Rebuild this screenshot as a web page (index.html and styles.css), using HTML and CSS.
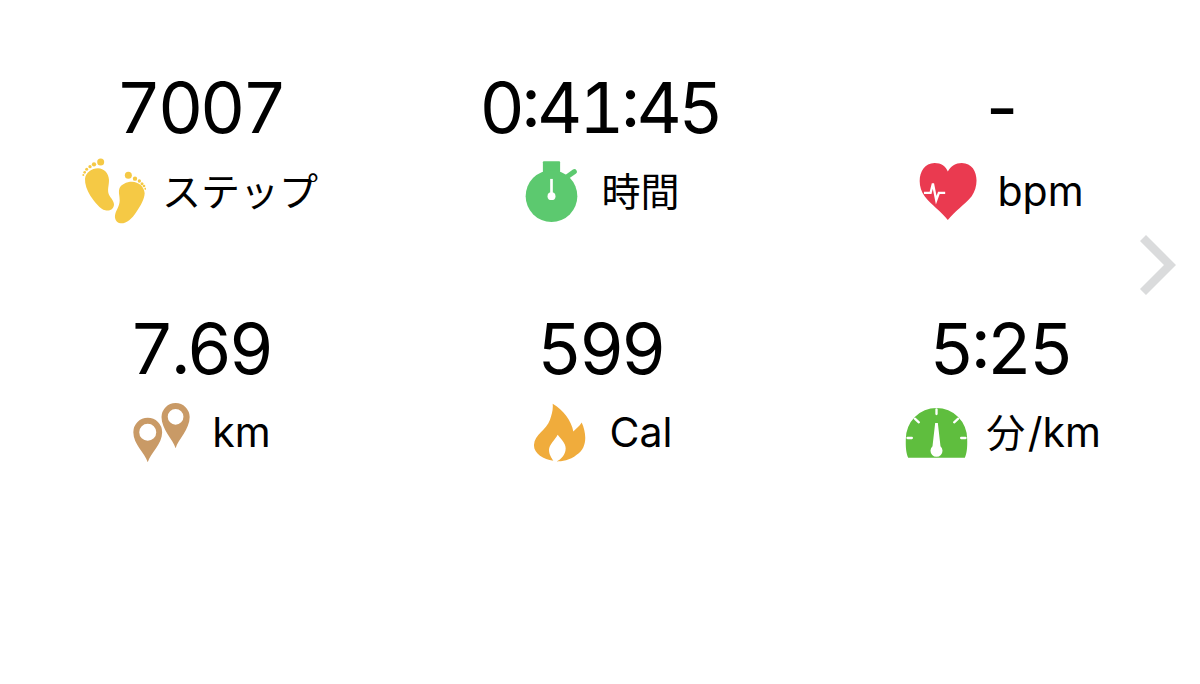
FILE: index.html
```html
<!DOCTYPE html>
<html lang="ja">
<head>
<meta charset="utf-8">
<title>Workout summary</title>
<link rel="stylesheet" href="styles.css">
</head>
<body>
<main class="summary">
  <section class="metric">
    <div class="value">7007</div>
    <div class="label">
      <svg class="icon icon-feet" viewBox="36 28 192 198" aria-hidden="true">
        <g fill="#f5c945">
          <path d="M84 59C102 59 116 74 117 94C117 112 111 124 117 138C122 148 132 156 132 168C131 182 118 188 106 185C90 181 75 161 61 141C51 124 44 106 45 90C47 72 65 59 84 59Z"/>
          <circle cx="92" cy="40" r="10.5"/><circle cx="72" cy="47" r="6.5"/><circle cx="60" cy="54" r="5"/><circle cx="50" cy="62" r="4.5"/><circle cx="44" cy="71" r="4"/><circle cx="40" cy="79" r="3"/>
          <path d="M186 99C206 99 223 114 224 134C223 152 213 170 199 190C185 211 170 225 152 224C138 222 132 208 136 195C140 182 149 172 149 155C149 140 145 132 148 120C152 107 170 99 186 99Z"/>
          <circle cx="175" cy="80" r="10.5"/><circle cx="195" cy="90" r="6.5"/><circle cx="208" cy="97" r="5"/><circle cx="216" cy="105" r="4.5"/><circle cx="222" cy="112" r="4"/><circle cx="226" cy="120" r="3"/>
        </g>
      </svg>
      <span class="label-text"><span class="cjk">ステップ</span></span>
    </div>
  </section>
  <section class="metric">
    <div class="value">0:41:45</div>
    <div class="label">
      <svg class="icon icon-timer" viewBox="50 34 160 184" aria-hidden="true">
        <rect x="104" y="35" width="52" height="40" rx="3" fill="#5cc96f"/>
        <path d="M176 82L199 66" stroke="#5cc96f" stroke-width="15" stroke-linecap="round"/>
        <circle cx="130" cy="140" r="78" fill="#5cc96f"/>
        <rect x="126" y="88" width="8" height="50" fill="#fff"/>
        <circle cx="130" cy="140" r="12" fill="#fff"/>
      </svg>
      <span class="label-text"><span class="cjk">時間</span></span>
    </div>
  </section>
  <section class="metric">
    <div class="value value-dash">-</div>
    <div class="label">
      <svg class="icon icon-heart" viewBox="45 38 175 176" aria-hidden="true">
        <path d="M132 212C112 186 82 166 62 140C34 104 46 40 92 40C112 40 126 50 132 66C140 50 156 40 174 40C222 40 230 104 204 140C182 166 152 186 132 212Z" fill="#ea3a50"/>
        <path d="M60 130H80L87 102L97 152L105 130H124" fill="none" stroke="#fff" stroke-width="7"/>
      </svg>
      <span class="label-text">bpm</span>
    </div>
  </section>
  <section class="metric">
    <div class="value">7.69</div>
    <div class="label">
      <svg class="icon icon-pins" viewBox="42 32 174 184" aria-hidden="true">
        <path fill-rule="evenodd" fill="#c99a66" d="M87 215C78 185 43 160 43 123A44 44 0 0 1 131 123C131 160 96 185 87 215ZM87 97A26 26 0 1 0 87 149A26 26 0 1 0 87 97Z"/>
        <path fill-rule="evenodd" fill="#c99a66" d="M172 172C164 145 129 115 129 77A43 43 0 0 1 215 77C215 115 180 145 172 172ZM172 52A24 24 0 1 0 172 100A24 24 0 1 0 172 52Z"/>
      </svg>
      <span class="label-text">km</span>
    </div>
  </section>
  <section class="metric">
    <div class="value">599</div>
    <div class="label">
      <svg class="icon icon-flame" viewBox="44 40 162 176" aria-hidden="true">
        <path fill="#f0ac3c" d="M103 42C135 60 160 95 165 125C172 118 185 108 190 98C205 130 208 175 175 195C155 212 130 215 115 215C128 208 142 195 142 175C142 160 125 145 118 135C110 150 92 165 92 180C92 195 100 205 105 213C75 210 45 190 47 165C48 135 85 120 95 90C100 75 105 60 103 42Z"/>
      </svg>
      <span class="label-text">Cal</span>
    </div>
  </section>
  <section class="metric">
    <div class="value">5:25</div>
    <div class="label">
      <svg class="icon icon-gauge" viewBox="28 50 188 153" aria-hidden="true">
        <path fill="#5fbe3e" d="M37 202C31 188 29 170 30 145A92 92 0 0 1 214 145C215 170 213 188 207 202Z"/>
        <path stroke="#fff" stroke-width="7" stroke-linecap="round" d="M122 57V71M57 85L69 96M187 85L175 96M35 143H48M196 143H209"/>
        <path fill="#fff" d="M118 98H126L134 168A18 18 0 1 1 110 168Z"/>
      </svg>
      <span class="label-text"><span class="cjk">分</span> /km</span>
    </div>
  </section>
  <svg class="next" viewBox="0 0 36 60" aria-hidden="true">
    <path fill="#dadbdc" d="M6 0L36 30L6 60L0 54L24 30L0 6Z"/>
  </svg>
</main>
</body>
</html>
```

FILE: styles.css
```css
html, body {
  margin: 0;
  padding: 0;
  background: #fff;
}

.summary {
  position: relative;
  box-sizing: border-box;
  width: 1200px;
  height: 684px;
  padding-top: 68px;
  display: grid;
  grid-template-columns: repeat(3, 400px);
  grid-auto-rows: 241px;
  align-content: start;
  color: #000;
  font-family: Inter, "Liberation Sans", "Noto Sans CJK JP", sans-serif;
}

.metric {
  display: flex;
  flex-direction: column;
  align-items: center;
  gap: 2px;
}

.metric:nth-child(3n+2) .label { padding-left: 5px; }
.metric:nth-child(3) .label { padding-left: 3px; }
.metric:nth-child(4) .label { padding-left: 4px; }
.metric:nth-child(6) .label { padding-left: 6px; }

.value {
  height: 80px;
  line-height: 80px;
  font-size: 70px;
  font-weight: 400;
  letter-spacing: -3.4px;
  font-variant-numeric: tabular-nums;
  font-feature-settings: "tnum", "case";
}

.value-dash {
  font-feature-settings: "tnum";
  padding-left: 1px;
}

.label {
  height: 82px;
  display: flex;
  align-items: center;
}

.label-text {
  font-size: 41px;
  line-height: 1;
  word-spacing: -9px;
}

.cjk {
  font-size: 39px;
  font-family: "Noto Sans CJK JP", sans-serif;
}

.icon { display: block; }
.icon-feet { width: 64px; height: 66px; margin-right: 16px; }
.icon-timer { width: 53px; height: 61px; margin-right: 23px; }
.icon-heart { width: 58px; height: 59px; margin-right: 20px; }
.icon-pins { width: 57px; height: 61px; margin-right: 22px; }
.icon-flame { width: 54px; height: 59px; margin-right: 23px; }
.icon-gauge { width: 63px; height: 51px; margin-right: 18px; }

.next {
  position: absolute;
  left: 1140px;
  top: 235px;
  width: 36px;
  height: 60px;
}
```
